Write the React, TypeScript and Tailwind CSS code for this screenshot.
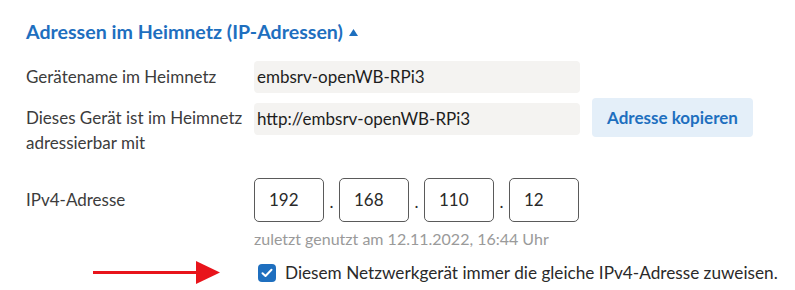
const font = { fontFamily: '"Source Sans Pro", Lato, "Liberation Sans", sans-serif' };

type RowProps = {
  label: React.ReactNode;
  children: React.ReactNode;
  className?: string;
};

const Row = ({ label, children, className }: RowProps) => (
  <div className={`flex ${className ?? ""}`}>
    <div className="w-[228px] shrink-0 text-[17px] leading-[25px] text-[#3c3c3c]">{label}</div>
    <div className="flex flex-1 items-start gap-3">{children}</div>
  </div>
);

const TextField = ({ value }: { value: string }) => (
  <div className="flex h-[32px] w-[326px] items-center rounded-[4px] bg-[#f4f3f1] pl-[3px] text-[17px] text-[#1d1d1d]">
    {value}
  </div>
);

const Octet = ({ value }: { value: string }) => (
  <div className="flex h-[44px] w-[70px] items-center rounded-[5px] border border-[#5a5a5a] pl-[14px] text-[17px] text-[#2a2a2a]">
    {value}
  </div>
);

export default function App() {
  const octets = ["192", "168", "110", "12"];
  return (
    <div className="h-[290px] w-[795px] overflow-hidden bg-white pl-[26px]" style={font}>
      <div className="flex items-center gap-[6px] pt-[19px] text-[19.6px] font-bold leading-[26px] text-[#1e6fbf]">
        Adressen im Heimnetz (IP-Adressen)
        <svg width="9" height="7" viewBox="0 0 9 7" className="mt-[1px]">
          <polygon points="4.5,0 9,7 0,7" fill="#1e6fbf" />
        </svg>
      </div>

      <Row label={<div className="pt-[3px]">Gerätename im Heimnetz</div>} className="mt-[16px]">
        <TextField value="embsrv-openWB-RPi3" />
      </Row>

      <Row
        label={
          <div className="pt-[2px]">
            Dieses Gerät ist im Heimnetz
            <br />
            adressierbar mit
          </div>
        }
        className="mt-[10px]"
      >
        <TextField value="http://embsrv-openWB-RPi3" />
        <button className="-mt-[5px] h-[39px] w-[161px] rounded-[4px] bg-[#e4eff9] text-[17px] font-bold text-[#1e6fbf]">
          Adresse kopieren
        </button>
      </Row>

      <Row label={<div className="pt-[9px]">IPv4-Adresse</div>} className="mt-[23px]">
        <div className="flex flex-col">
          <div className="flex items-end">
            {octets.map((o, i) => (
              <div key={o + i} className="flex items-end">
                {i > 0 && <span className="w-[15px] pb-[8px] text-center text-[17px] text-[#2a2a2a]">.</span>}
                <Octet value={o} />
              </div>
            ))}
          </div>
          <div className="mt-[6px] text-[16px] leading-[22px] text-[#9a9a9a]">
            zuletzt genutzt am 12.11.2022, 16:44 Uhr
          </div>
        </div>
      </Row>

      <div className="mt-[10px] flex items-center">
        <svg width="127" height="23" viewBox="0 0 127 23" className="ml-[67px]">
          <rect x="0" y="10" width="105" height="3" fill="#e8141b" />
          <polygon points="103,0 127,11.5 103,23" fill="#e8141b" />
        </svg>
        <div className="ml-[38px] flex h-[18px] w-[18px] items-center justify-center rounded-[4px] bg-[#1e6fbf]">
          <svg width="12" height="10" viewBox="0 0 12 10">
            <path d="M1.5 5.2 L4.5 8 L10.5 1.8" fill="none" stroke="white" strokeWidth="2" strokeLinecap="round" strokeLinejoin="round" />
          </svg>
        </div>
        <span className="ml-[9px] text-[17.2px] text-[#2a2a2a]">
          Diesem Netzwerkgerät immer die gleiche IPv4-Adresse zuweisen.
        </span>
      </div>
    </div>
  );
}
